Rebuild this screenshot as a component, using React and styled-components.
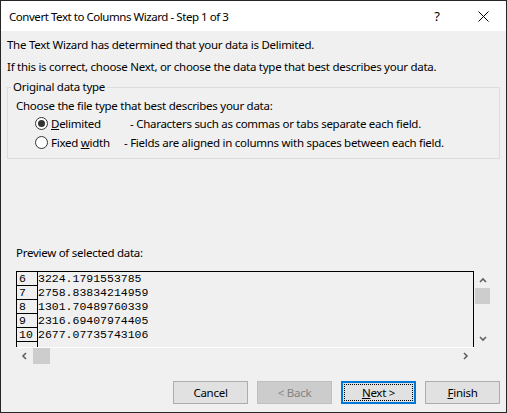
import React from 'react';
import styled, { createGlobalStyle } from 'styled-components';

const GlobalStyle = createGlobalStyle`
  html, body {
    margin: 0;
    padding: 0;
    background: #fff;
  }
  body {
    font-family: "Noto Sans", "Liberation Sans", sans-serif;
    font-size: 11.5px;
    letter-spacing: -0.27px;
    color: #000;
  }
  * {
    box-sizing: border-box;
  }
`;

const Window = styled.div`
  width: 507px;
  height: 413px;
  border: 1px solid #262626;
  display: flex;
  flex-direction: column;
  background: #f0f0f0;
`;

const TitleBar = styled.div`
  height: 30px;
  flex-shrink: 0;
  background: #fff;
  display: flex;
  align-items: center;
  padding-left: 8px;
`;

const Title = styled.div`
  flex: 1;
  white-space: nowrap;
  letter-spacing: -0.45px;
`;

const CaptionButton = styled.div`
  width: 46px;
  height: 30px;
  display: flex;
  align-items: center;
  justify-content: center;
  font-size: 13px;
`;

const Body = styled.div`
  flex: 1;
  display: flex;
  flex-direction: column;
  padding: 6px 6px 8px;
`;

const Intro = styled.div`
  display: flex;
  flex-direction: column;
  gap: 6px;
`;

const Line = styled.div`
  line-height: 16px;
  white-space: nowrap;
`;

const Group = styled.fieldset`
  margin: 4px 0 0;
  min-width: 0;
  border: 1px solid #dcdcdc;
  padding: 3px 8px 6px;
`;

const Legend = styled.legend`
  padding: 0 2px;
  margin-left: -5px;
  line-height: 16px;
`;

const RadioRow = styled.div`
  height: 19px;
  display: flex;
  align-items: center;
  padding-left: 19px;
  white-space: nowrap;
`;

const Radio = styled.span`
  width: 13px;
  height: 13px;
  border-radius: 50%;
  border: 1px solid #333;
  background: #fff;
  display: inline-flex;
  align-items: center;
  justify-content: center;
  margin-right: 3px;
  flex-shrink: 0;

  &::after {
    content: '';
    width: 7px;
    height: 7px;
    border-radius: 50%;
    background: #333;
    display: ${({ $checked }) => ($checked ? 'block' : 'none')};
  }
`;

const RadioLabel = styled.span`
  width: ${({ $w }) => $w}px;
  flex-shrink: 0;
`;

const Preview = styled.div`
  margin-top: auto;
  padding-left: 9px;
`;

const PreviewLabel = styled.div`
  line-height: 16px;
  margin-bottom: 10px;
`;

const PreviewBox = styled.div`
  width: 475px;
  height: 93px;
  display: grid;
  grid-template-columns: 458px 17px;
  grid-template-rows: 76px 17px;
`;

const DataArea = styled.div`
  border: 1px solid #000;
  border-bottom: none;
  display: flex;
  overflow: hidden;
  font-family: "Liberation Mono", "DejaVu Sans Mono", monospace;
  font-size: 11.5px;
  letter-spacing: 0;
`;

const NumCol = styled.div`
  width: 21px;
  border-right: 1px solid #000;
  flex-shrink: 0;
`;

const NumCell = styled.div`
  height: 14px;
  line-height: 14px;
  border-bottom: 1px solid #000;
  padding-left: 2px;
`;

const DataCol = styled.div`
  flex: 1;
`;

const DataRow = styled.div`
  height: 14px;
  line-height: 14px;
  white-space: pre;
`;

const VScroll = styled.div`
  display: flex;
  flex-direction: column;
`;

const HScroll = styled.div`
  display: flex;
  border-top: 1px solid #fff;
`;

const ArrowBtn = styled.div`
  width: 17px;
  height: ${({ $h }) => $h || 17}px;
  display: flex;
  align-items: center;
  justify-content: center;
  flex-shrink: 0;
`;

const Thumb = styled.div`
  background: #cdcdcd;
  flex-shrink: 0;
  ${({ $vertical }) =>
    $vertical
      ? 'height: 16px; margin: 0 1px;'
      : 'width: 17px; height: 16px;'}
`;

const Spacer = styled.div`
  flex: 1;
`;

const ButtonRow = styled.div`
  display: flex;
  justify-content: flex-end;
  gap: 9px;
  margin-top: 17px;
`;

const Button = styled.div`
  position: relative;
  width: 75px;
  height: 23px;
  display: flex;
  align-items: center;
  justify-content: center;
  background: ${({ $disabled }) => ($disabled ? '#cccccc' : '#e1e1e1')};
  border: ${({ $focused, $disabled }) =>
    $focused ? '2px solid #0078d7' : `1px solid ${$disabled ? '#bfbfbf' : '#adadad'}`};
  color: ${({ $disabled }) => ($disabled ? '#838383' : '#000')};

  ${({ $focused }) =>
    $focused &&
    `&::after {
      content: '';
      position: absolute;
      inset: 1px;
      border: 1px dotted #000;
    }`}
`;

const Chevron = ({ dir }) => {
  const pts = {
    up: '1,5 4,2 7,5',
    down: '1,1 4,4 7,1',
    left: '5,1 2,4 5,7',
    right: '2,1 5,4 2,7',
  }[dir];
  const vertical = dir === 'up' || dir === 'down';
  return (
    <svg width={vertical ? 8 : 7} height={vertical ? 6 : 8} viewBox={vertical ? '0 0 8 6' : '0 0 7 8'}>
      <polyline points={pts} fill="none" stroke="#606060" strokeWidth="1.6" />
    </svg>
  );
};

const rows = [
  ['6', '3224.1791553785'],
  ['7', '2758.83834214959'],
  ['8', '1301.70489760339'],
  ['9', '2316.69407974405'],
  ['10', '2677.07735743106'],
  ['', ''],
];

const App = () => {
  return (
    <>
      <GlobalStyle />
      <Window>
        <TitleBar>
          <Title>Convert Text to Columns Wizard - Step 1 of 3</Title>
          <CaptionButton>?</CaptionButton>
          <CaptionButton>
            <svg width="11" height="11" viewBox="0 0 11 11">
              <path d="M0.5 0.5 L10.5 10.5 M10.5 0.5 L0.5 10.5" stroke="#000" strokeWidth="1" />
            </svg>
          </CaptionButton>
        </TitleBar>
        <Body>
          <Intro>
            <Line>The Text Wizard has determined that your data is Delimited.</Line>
            <Line>If this is correct, choose Next, or choose the data type that best describes your data.</Line>
          </Intro>
          <Group>
            <Legend>Original data type</Legend>
            <Line>Choose the file type that best describes your data:</Line>
            <RadioRow>
              <Radio $checked />
              <RadioLabel $w={79}>
                <u>D</u>elimited
              </RadioLabel>
              <span>- Characters such as commas or tabs separate each field.</span>
            </RadioRow>
            <RadioRow>
              <Radio />
              <RadioLabel $w={73}>
                Fixed <u>w</u>idth
              </RadioLabel>
              <span>- Fields are aligned in columns with spaces between each field.</span>
            </RadioRow>
          </Group>
          <Preview>
            <PreviewLabel>Preview of selected data:</PreviewLabel>
            <PreviewBox>
              <DataArea>
                <NumCol>
                  {rows.map(([n], i) => (
                    <NumCell key={i}>{n}</NumCell>
                  ))}
                </NumCol>
                <DataCol>
                  {rows.map(([, v], i) => (
                    <DataRow key={i}>{v}</DataRow>
                  ))}
                </DataCol>
              </DataArea>
              <VScroll>
                <ArrowBtn>
                  <Chevron dir="up" />
                </ArrowBtn>
                <Thumb $vertical />
                <Spacer />
                <ArrowBtn>
                  <Chevron dir="down" />
                </ArrowBtn>
              </VScroll>
              <HScroll>
                <ArrowBtn $h={16}>
                  <Chevron dir="left" />
                </ArrowBtn>
                <Thumb />
                <Spacer />
                <ArrowBtn $h={16}>
                  <Chevron dir="right" />
                </ArrowBtn>
              </HScroll>
              <div />
            </PreviewBox>
          </Preview>
          <ButtonRow>
            <Button>Cancel</Button>
            <Button $disabled>&lt; Back</Button>
            <Button $focused>
              <span>
                <u>N</u>ext &gt;
              </span>
            </Button>
            <Button>
              <span>
                <u>F</u>inish
              </span>
            </Button>
          </ButtonRow>
        </Body>
      </Window>
    </>
  );
};

export default App;
